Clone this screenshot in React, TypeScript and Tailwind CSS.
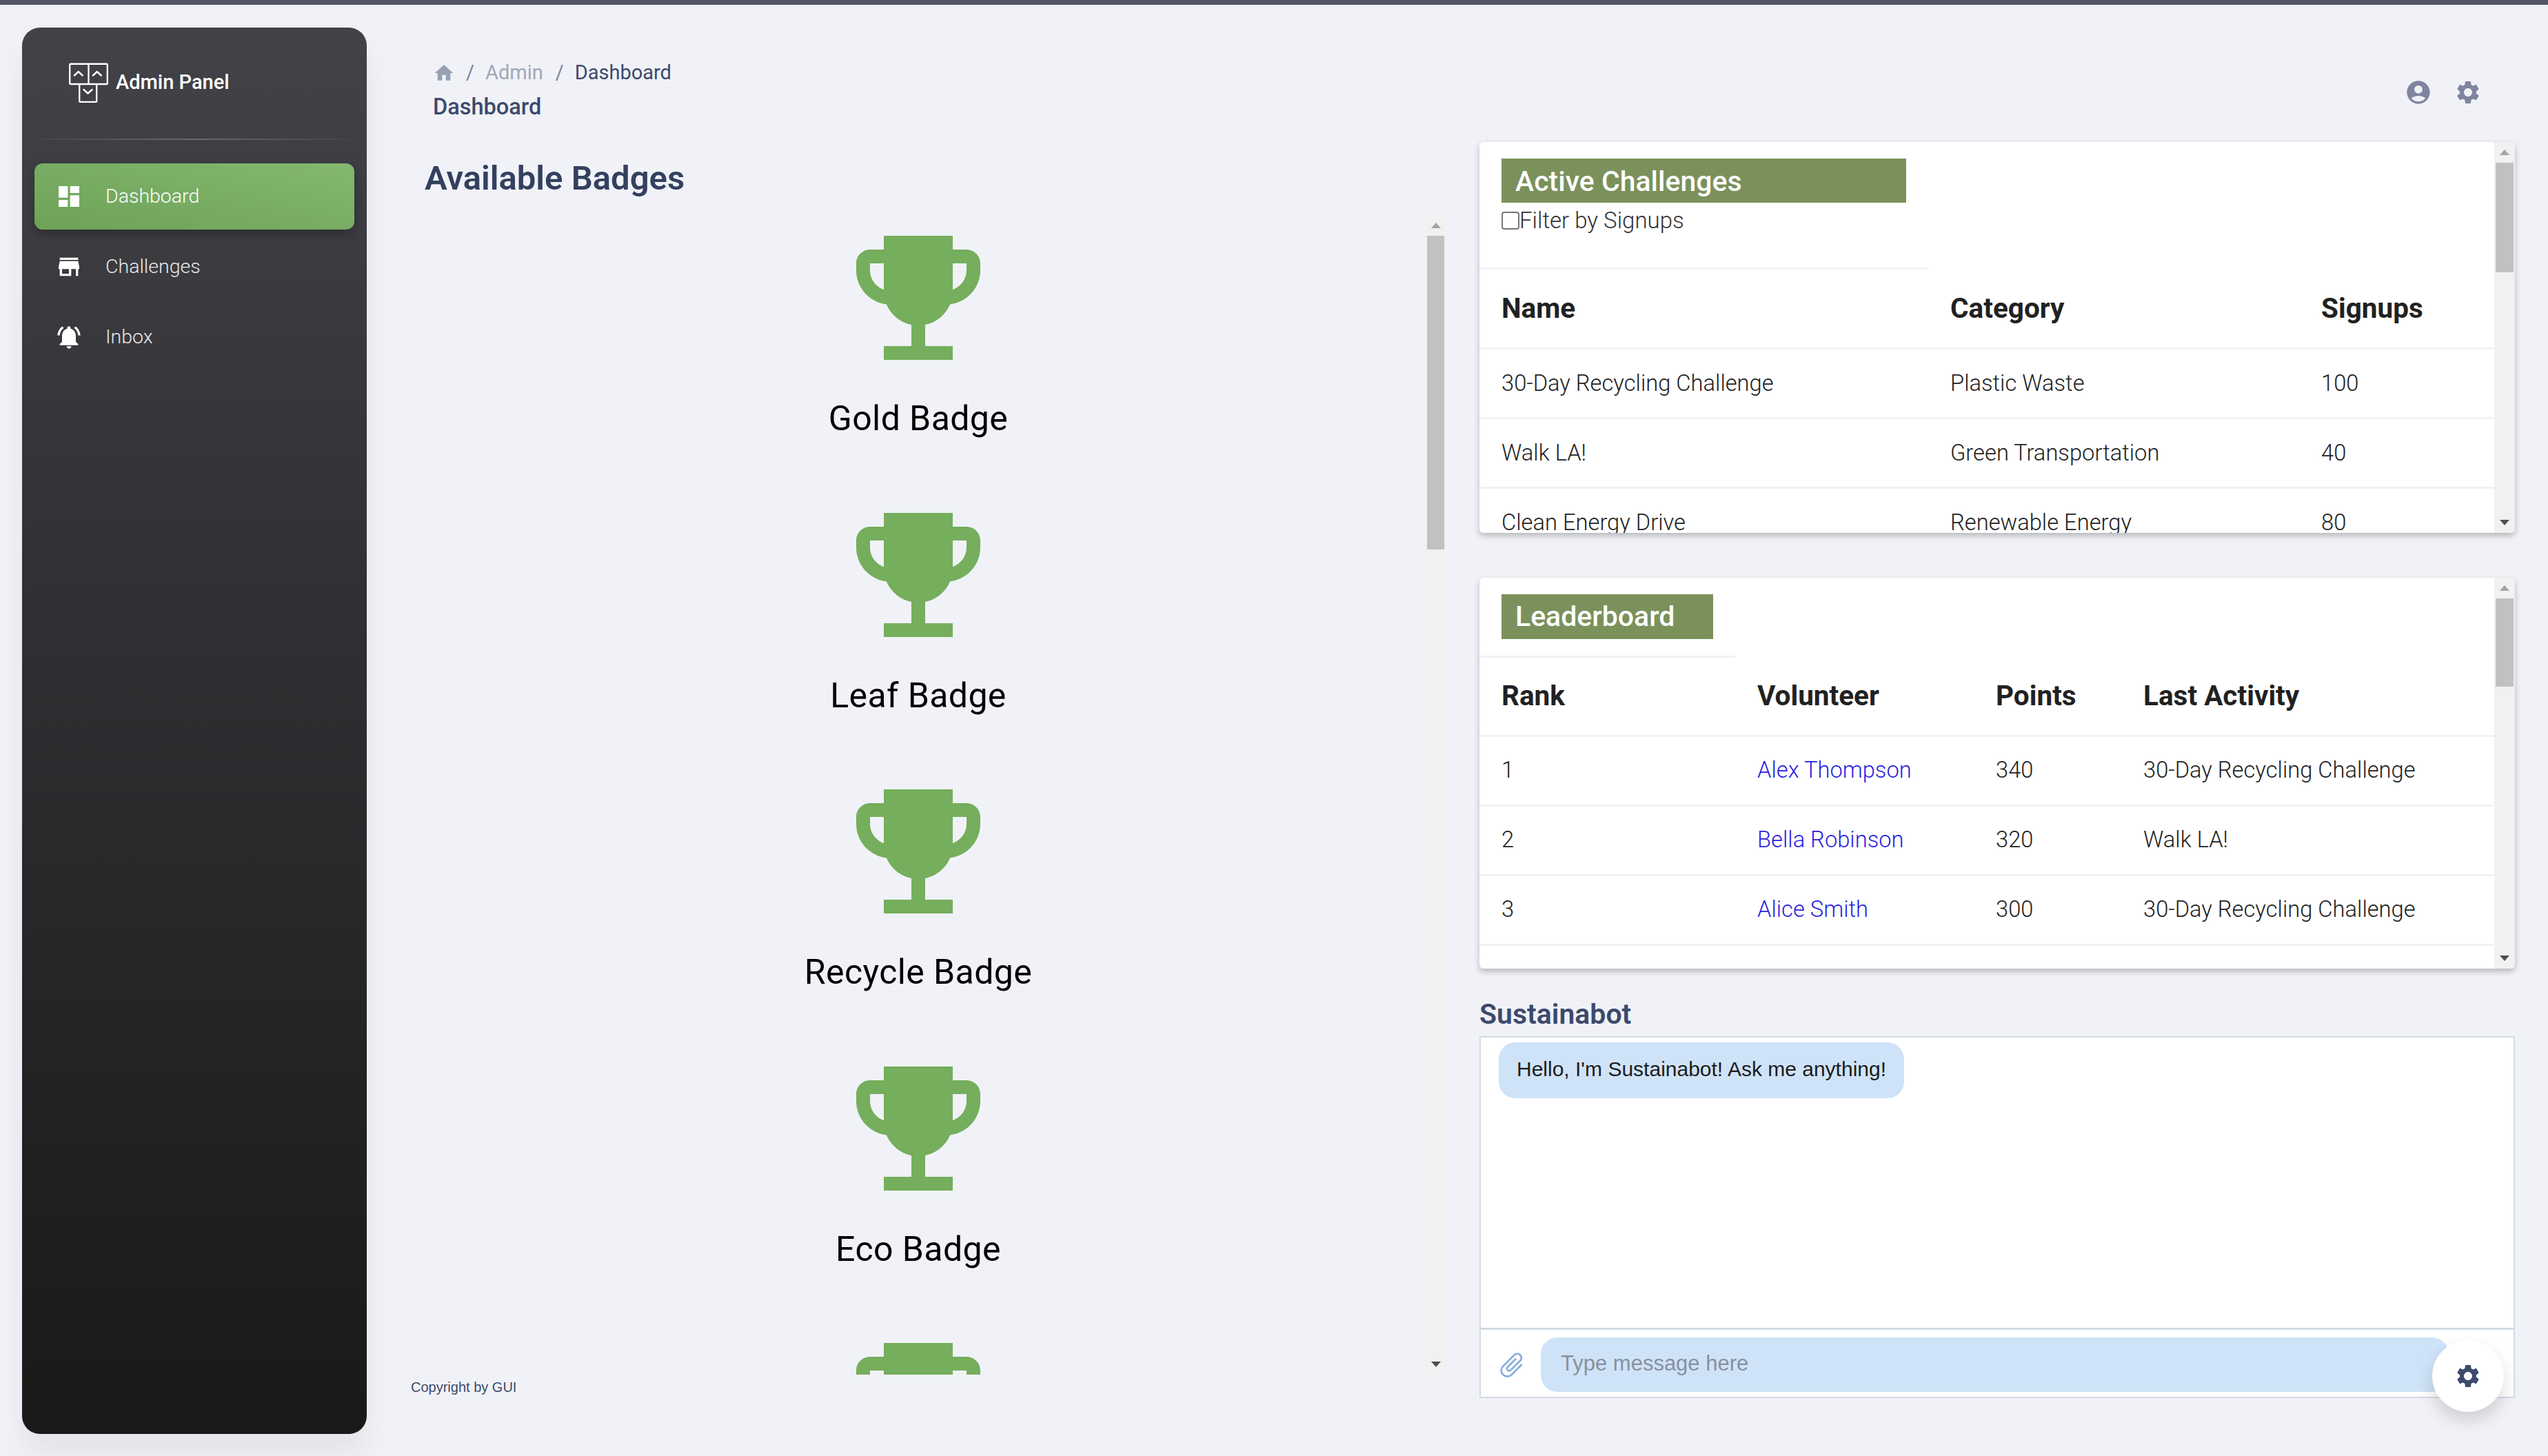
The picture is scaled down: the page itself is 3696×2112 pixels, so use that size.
import React from "react";

const ICONS = {
  dashboard: "M3 13h8V3H3v10zm0 8h8v-6H3v6zm10 0h8V11h-8v10zm0-18v6h8V3h-8z",
  store: "M20 4H4v2h16V4zm1 10v-2l-1-5H4l-1 5v2h1v6h10v-6h4v6h2v-6h1zm-9 4H6v-4h6v4z",
  bell: "M7.58 4.08 6.15 2.65C3.75 4.48 2.17 7.3 2.03 10.5h2c.15-2.65 1.51-4.97 3.55-6.42zm12.39 6.42h2c-.15-3.2-1.73-6.02-4.12-7.85l-1.42 1.43c2.02 1.45 3.39 3.77 3.54 6.42zM18 11c0-3.07-1.64-5.64-4.5-6.32V4c0-.83-.67-1.5-1.5-1.5s-1.5.67-1.5 1.5v.68C7.63 5.36 6 7.92 6 11v5l-2 2v1h16v-1l-2-2v-5zm-6 11c.14 0 .27-.01.4-.04.65-.14 1.18-.58 1.44-1.18.1-.24.15-.5.15-.78h-4c.01 1.1.9 2 2.01 2z",
  home: "M10 20v-6h4v6h5v-8h3L12 3 2 12h3v8z",
  account: "M12 2C6.48 2 2 6.48 2 12s4.48 10 10 10 10-4.48 10-10S17.52 2 12 2zm0 4c1.93 0 3.5 1.57 3.5 3.5S13.93 13 12 13s-3.5-1.57-3.5-3.5S10.07 6 12 6zm0 14c-2.03 0-4.43-.82-6.14-2.88C7.55 15.8 9.68 15 12 15s4.45.8 6.14 2.12C16.43 19.18 14.03 20 12 20z",
  settings: "M19.14 12.94c.04-.3.06-.61.06-.94 0-.32-.02-.64-.07-.94l2.03-1.58c.18-.14.23-.41.12-.61l-1.92-3.32c-.12-.22-.37-.29-.59-.22l-2.39.96c-.5-.38-1.03-.7-1.62-.94l-.36-2.54c-.04-.24-.24-.41-.48-.41h-3.84c-.24 0-.43.17-.47.41l-.36 2.54c-.59.24-1.13.57-1.62.94l-2.39-.96c-.22-.08-.47 0-.59.22L2.74 8.87c-.12.21-.08.47.12.61l2.03 1.58c-.05.3-.09.63-.09.94s.02.64.07.94l-2.03 1.58c-.18.14-.23.41-.12.61l1.92 3.32c.12.22.37.29.59.22l2.39-.96c.5.38 1.03.7 1.62.94l.36 2.54c.05.24.24.41.48.41h3.84c.24 0 .44-.17.47-.41l.36-2.54c.59-.24 1.13-.56 1.62-.94l2.39.96c.22.08.47 0 .59-.22l1.92-3.32c.12-.22.07-.47-.12-.61l-2.01-1.58zM12 15.6c-1.98 0-3.6-1.62-3.6-3.6s1.62-3.6 3.6-3.6 3.6 1.62 3.6 3.6-1.62 3.6-3.6 3.6z",
  trophy: "M19 5h-2V3H7v2H5c-1.1 0-2 .9-2 2v1c0 2.55 1.92 4.63 4.39 4.94.63 1.5 1.98 2.63 3.61 2.96V19H7v2h10v-2h-4v-3.1c1.63-.33 2.98-1.46 3.61-2.96C19.08 12.63 21 10.55 21 8V7c0-1.1-.9-2-2-2zM5 8V7h2v3.82C5.84 10.4 5 9.3 5 8zm14 0c0 1.3-.84 2.4-2 2.82V7h2v1z",
  attach: "M16.5 6v11.5c0 2.21-1.79 4-4 4s-4-1.79-4-4V5c0-1.38 1.12-2.5 2.5-2.5s2.5 1.12 2.5 2.5v10.5c0 .55-.45 1-1 1s-1-.45-1-1V6H10v9.5c0 1.38 1.12 2.5 2.5 2.5s2.5-1.12 2.5-2.5V5c0-2.21-1.79-4-4-4S7 2.79 7 5v12.5c0 3.04 2.46 5.5 5.5 5.5s5.5-2.46 5.5-5.5V6h-1.5z",
};

function Icon({ name, className }: { name: keyof typeof ICONS; className: string }) {
  return (
    <svg viewBox="0 0 24 24" fill="currentColor" className={className}>
      <path d={ICONS[name]} />
    </svg>
  );
}

function Logo() {
  return (
    <svg viewBox="0 0 57 58" fill="none" stroke="white" strokeWidth="2.4" className="w-[57px] h-[58px] shrink-0">
      <rect x="1.2" y="1.7" width="54.6" height="29.3" rx="1.5" />
      <path d="M28.5 1.7v29.3" />
      <path d="M15.200 31v24.500a1.500 1.500 0 0 0 1.500 1.500h22a1.500 1.500 0 0 0 1.500-1.500V31" />
      <path d="M7.800 18.500l6-5.500 6 5.500M34.800 18.500l6-5.500 6 5.500M21.500 39l6 5.500 6-5.500" strokeLinecap="round" strokeLinejoin="round" />
    </svg>
  );
}

function ScrollBar({ thumbTop, thumbHeight, width }: { thumbTop: number; thumbHeight: number; width: string }) {
  return (
    <div className={`${width} shrink-0 bg-[#f1f1f1] flex flex-col items-center relative`}>
      <div className="mt-[11px] w-0 h-0 border-x-[7px] border-x-transparent border-b-[8px] border-b-[#a3a3a3]" />
      <div className="absolute inset-x-[2px] bg-[#c1c1c1]" style={{ top: thumbTop, height: thumbHeight }} />
      <div className="mt-auto mb-[11px] w-0 h-0 border-x-[7px] border-x-transparent border-t-[8px] border-t-[#505050]" />
    </div>
  );
}

function NavItem({ icon, label, active }: { icon: keyof typeof ICONS; label: string; active?: boolean }) {
  return (
    <div
      className={
        active
          ? "h-[96px] flex items-center pl-[30px] rounded-[12px] bg-gradient-to-tr from-[#6da257] to-[#84b870] shadow-[0_6px_14px_rgba(0,0,0,0.25)] text-white"
          : "h-[96px] flex items-center pl-[30px] text-[#e8e8ea]"
      }
    >
      <Icon name={icon} className="w-[40px] h-[40px] text-white shrink-0" />
      <span className="ml-[33px] text-[28.5px] font-light">{label}</span>
    </div>
  );
}

const challenges = [
  ["30-Day Recycling Challenge", "Plastic Waste", "100"],
  ["Walk LA!", "Green Transportation", "40"],
  ["Clean Energy Drive", "Renewable Energy", "80"],
];

const leaders = [
  ["1", "Alex Thompson", "340", "30-Day Recycling Challenge"],
  ["2", "Bella Robinson", "320", "Walk LA!"],
  ["3", "Alice Smith", "300", "30-Day Recycling Challenge"],
];

const badges = ["Gold Badge", "Leaf Badge", "Recycle Badge", "Eco Badge"];

export default function App() {
  return (
    <div className="w-[3696px] h-[2112px] overflow-hidden bg-[#f0f2f7] font-['Roboto',sans-serif] flex flex-col">
      <div className="h-[7px] bg-[#555566] shrink-0" />
      <div className="flex flex-1 min-h-0">
        {/* sidebar */}
        <aside className="w-[500px] h-[2040px] mt-[33px] ml-[32px] shrink-0 rounded-[26px] bg-gradient-to-b from-[#424248] to-[#191919] shadow-[0_30px_40px_rgba(0,0,0,0.06)] flex flex-col">
          <div className="h-[161px] shrink-0 flex pl-[68px] pt-[51px]">
            <Logo />
            <span className="ml-[11px] mt-[12px] text-[29px] leading-[32px] font-medium text-white">Admin Panel</span>
          </div>
          <div className="h-[2px] shrink-0 bg-gradient-to-r from-transparent via-[#6a6a70] to-transparent" />
          <nav className="mt-[34px] px-[18px] flex flex-col gap-[6px]">
            <NavItem icon="dashboard" label="Dashboard" active />
            <NavItem icon="store" label="Challenges" />
            <NavItem icon="bell" label="Inbox" />
          </nav>
        </aside>

        {/* main area */}
        <div className="flex-1 min-w-0 pl-[64px] pr-[48px] flex gap-[49px]">
          {/* left column */}
          <div className="w-[1501px] shrink-0 flex flex-col">
            <div className="pl-[32px] pt-[84px] flex flex-col">
              <div className="flex items-center h-[30px] text-[29px] text-[#3c4a6b]">
                <Icon name="home" className="w-[32px] h-[32px] text-[#98a1b3] shrink-0" />
                <span className="ml-[16px] text-[#7b8499]">/</span>
                <span className="ml-[16px] text-[#a0a7b8]">Admin</span>
                <span className="ml-[18px] text-[#7b8499]">/</span>
                <span className="ml-[16px]">Dashboard</span>
              </div>
              <div className="mt-[16px] text-[32.500px] leading-[36px] font-medium text-[#3c4a6b]">Dashboard</div>
            </div>
            <h1 className="mt-[58px] ml-[20px] text-[49px] leading-[56px] font-semibold text-[#34405f]">Available Badges</h1>
            <div className="mt-[25px] h-[1682px] shrink-0 flex">
              <div className="flex-1 overflow-hidden flex flex-col items-center">
                {badges.concat("").map((b, i) => (
                  <div key={i} className="shrink-0 h-[401.500px] flex flex-col items-center">
                    <Icon name="trophy" className="w-[240px] h-[240px] text-[#75ae5c] shrink-0" />
                    <div className="mt-[25px] text-[50px] leading-[60px] tracking-[0.4px] text-black whitespace-nowrap">{b}</div>
                  </div>
                ))}
              </div>
              <ScrollBar thumbTop={30} thumbHeight={455} width="w-[29px]" />
            </div>
            <div className="mt-[6px] font-['Liberation_Sans',sans-serif] text-[20px] leading-[24px] text-[#3c4a6b]">Copyright by GUI</div>
          </div>

          {/* right column */}
          <div className="w-[1502px] shrink-0 flex flex-col relative">
            <div className="h-[199px] shrink-0 flex justify-end items-start pt-[107px] pr-[48px] gap-[32px] text-[#7f849f]">
              <Icon name="account" className="w-[40px] h-[40px]" />
              <Icon name="settings" className="w-[40px] h-[40px]" />
            </div>

            {/* active challenges */}
            <section className="h-[567px] shrink-0 bg-white rounded-[6px] shadow-[0_4px_8px_rgba(0,0,0,0.25)] flex overflow-hidden">
              <div className="flex-1 min-w-0 overflow-hidden">
                <div className="w-[651px] h-[185px] border-b-[3px] border-[#f2f2f7] pl-[32px] pt-[24px]">
                  <div className="w-[587px] h-[64px] bg-[#7b915b] pl-[20px] text-[41px] leading-[66px] font-medium text-white">Active Challenges</div>
                  <label className="flex items-center h-[40px] mt-[6px] text-[33px] font-light text-[#333]">
                    <input type="checkbox" className="appearance-none w-[26px] h-[26px] rounded-[4px] border-[2px] border-[#767676] bg-white" />
                    Filter by Signups
                  </label>
                </div>
                <table className="w-[1472px] table-fixed border-collapse text-left">
                  <colgroup>
                    <col className="w-[683px]" />
                    <col className="w-[538px]" />
                    <col />
                  </colgroup>
                  <thead>
                    <tr className="h-[114px] border-b-[3px] border-[#f2f2f4] text-[40.500px] text-[#212121]">
                      <th className="pl-[32px] font-bold">Name</th>
                      <th className="font-bold">Category</th>
                      <th className="font-bold">Signups</th>
                    </tr>
                  </thead>
                  <tbody>
                    {challenges.map((row) => (
                      <tr key={row[0]} className="h-[101px] border-b-[3px] border-[#f2f2f4] text-[32.700px] font-light text-[#222]">
                        <td className="pl-[32px] pt-[2px]">{row[0]}</td>
                        <td className="pt-[2px]">{row[1]}</td>
                        <td className="pt-[2px]">{row[2]}</td>
                      </tr>
                    ))}
                  </tbody>
                </table>
              </div>
              <ScrollBar thumbTop={30} thumbHeight={159} width="w-[30px]" />
            </section>

            {/* leaderboard */}
            <section className="mt-[65px] h-[567px] shrink-0 bg-white rounded-[6px] shadow-[0_4px_8px_rgba(0,0,0,0.25)] flex overflow-hidden">
              <div className="flex-1 min-w-0 overflow-hidden">
                <div className="w-[371px] h-[116px] border-b-[3px] border-[#f2f2f7] pl-[32px] pt-[24px]">
                  <div className="w-[307px] h-[65px] bg-[#7b915b] pl-[20px] text-[41px] leading-[65px] font-medium text-white">Leaderboard</div>
                </div>
                <table className="w-[1472px] table-fixed border-collapse text-left">
                  <colgroup>
                    <col className="w-[403px]" />
                    <col className="w-[346px]" />
                    <col className="w-[214px]" />
                    <col />
                  </colgroup>
                  <thead>
                    <tr className="h-[113px] border-b-[3px] border-[#f2f2f4] text-[40.500px] text-[#212121]">
                      <th className="pl-[32px] font-bold">Rank</th>
                      <th className="font-bold">Volunteer</th>
                      <th className="font-bold">Points</th>
                      <th className="font-bold">Last Activity</th>
                    </tr>
                  </thead>
                  <tbody>
                    {leaders.map((row) => (
                      <tr key={row[0]} className="h-[101px] border-b-[3px] border-[#f2f2f4] text-[32.700px] font-light text-[#222]">
                        <td className="pl-[32px] pt-[1px]">{row[0]}</td>
                        <td className="pt-[1px] text-[#2a1fe0]">{row[1]}</td>
                        <td className="pt-[1px]">{row[2]}</td>
                        <td className="pt-[1px]">{row[3]}</td>
                      </tr>
                    ))}
                  </tbody>
                </table>
              </div>
              <ScrollBar thumbTop={30} thumbHeight={128} width="w-[30px]" />
            </section>

            {/* chat */}
            <h2 className="mt-[40px] h-[58px] shrink-0 text-[41px] leading-[52px] font-semibold text-[#3c4a6b]">Sustainabot</h2>
            <div className="h-[525px] shrink-0 border-[2px] border-[#d3dbe5] bg-white flex flex-col font-['Liberation_Sans',sans-serif]">
              <div className="h-[424px] shrink-0 pl-[26px] pt-[7px] border-b-[3px] border-[#d3dbe5]">
                <div className="inline-block rounded-[24px] bg-[#cfe3f8] px-[26px] h-[81px] leading-[78px] text-[30px] text-[#1c1c1c]">
                  Hello, I'm Sustainabot! Ask me anything!
                </div>
              </div>
              <div className="flex-1 flex items-center pl-[23px] pt-[4px]">
                <Icon name="attach" className="w-[44px] h-[44px] text-[#8aaedb] rotate-45 shrink-0" />
                <div className="ml-[20px] w-[1317px] h-[79px] rounded-[24px] bg-[#cfe3f8] pl-[29px] leading-[76px] text-[31px] text-[#87919f]">
                  Type message here
                </div>
              </div>
            </div>
            <div className="absolute left-[1382px] top-[1937px] w-[104px] h-[104px] rounded-full bg-white shadow-[0_12px_24px_rgba(0,0,0,0.15)] flex items-center justify-center">
              <Icon name="settings" className="w-[40px] h-[40px] text-[#3c4a6b]" />
            </div>
          </div>
        </div>
      </div>
    </div>
  );
}
